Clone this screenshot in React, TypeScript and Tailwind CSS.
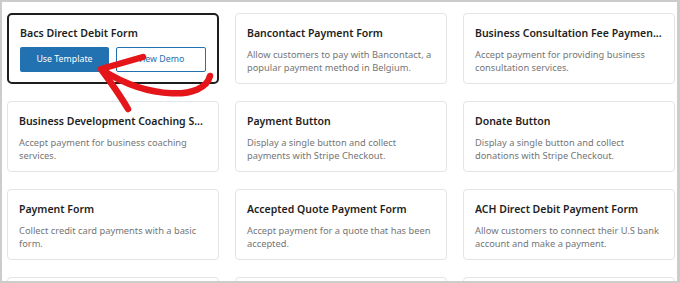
import React from "react";

type Template = {
  title: string;
  description: string;
};

const templates: Template[] = [
  { title: "Bacs Direct Debit Form", description: "" },
  {
    title: "Bancontact Payment Form",
    description: "Allow customers to pay with Bancontact, a popular payment method in Belgium.",
  },
  {
    title: "Business Consultation Fee Paymen...",
    description: "Accept payment for providing business consultation services.",
  },
  {
    title: "Business Development Coaching S...",
    description: "Accept payment for business coaching services.",
  },
  {
    title: "Payment Button",
    description: "Display a single button and collect payments with Stripe Checkout.",
  },
  {
    title: "Donate Button",
    description: "Display a single button and collect donations with Stripe Checkout.",
  },
  {
    title: "Payment Form",
    description: "Collect credit card payments with a basic form.",
  },
  {
    title: "Accepted Quote Payment Form",
    description: "Accept payment for a quote that has been accepted.",
  },
  {
    title: "ACH Direct Debit Payment Form",
    description: "Allow customers to connect their U.S bank account and make a payment.",
  },
  { title: "", description: "" },
  { title: "", description: "" },
  { title: "", description: "" },
];

function TemplateCard({ item, selected }: { item: Template; selected?: boolean }) {
  if (selected) {
    return (
      <div className="h-[71px] rounded-[5px] border-2 border-[#1e1e1e] bg-white px-[11px] pt-[10px]">
        <h3 className="text-[10.6px] leading-[16px] font-semibold text-[#1e1e1e]">{item.title}</h3>
        <div className="mt-[6px] flex gap-[7px]">
          <button className="h-[25px] w-[90px] rounded-[2px] bg-[#2271b1] text-[8.8px] text-white">
            Use Template
          </button>
          <button className="h-[25px] w-[91px] rounded-[2px] border border-[#2271b1] bg-white text-[8.8px] text-[#2271b1]">
            View Demo
          </button>
        </div>
      </div>
    );
  }

  return (
    <div className="h-[71px] rounded-[4px] border border-[#e2e4e7] bg-white pl-[11px] pr-[8px] pt-[11px]">
      <h3 className="overflow-hidden whitespace-nowrap text-[10.5px] leading-[16px] font-semibold text-[#1e1e1e]">
        {item.title}
      </h3>
      <p className="mt-[8px] pr-[3px] text-[9.3px] leading-[12.7px] text-[#757575]">
        {item.description}
      </p>
    </div>
  );
}

export default function App() {
  return (
    <div
      className="relative h-[283px] w-[680px] overflow-hidden border-2 border-r-[3px] border-[#cccccc] bg-white"
      style={{ fontFamily: '"Noto Sans", "Open Sans", sans-serif' }}
    >
      <div className="grid grid-cols-[212px_212px_212px] gap-x-[16px] gap-y-[17px] pl-[5px] pt-[11px]">
        {templates.map((t, i) => (
          <TemplateCard key={i} item={t} selected={i === 0} />
        ))}
      </div>

      {/* red annotation arrow */}
      <svg
        className="pointer-events-none absolute left-0 top-0"
        width="680"
        height="283"
        viewBox="0 0 680 283"
      >
        <g
          fill="none"
          stroke="#e5161a"
          strokeWidth="6.5"
          strokeLinecap="round"
          strokeLinejoin="round"
        >
          <path d="M208 74 C 202 98, 148 98, 100 68" />
          <path d="M141 55 L 99 67 C 110 82, 118 93, 126 107" />
        </g>
      </svg>
    </div>
  );
}
